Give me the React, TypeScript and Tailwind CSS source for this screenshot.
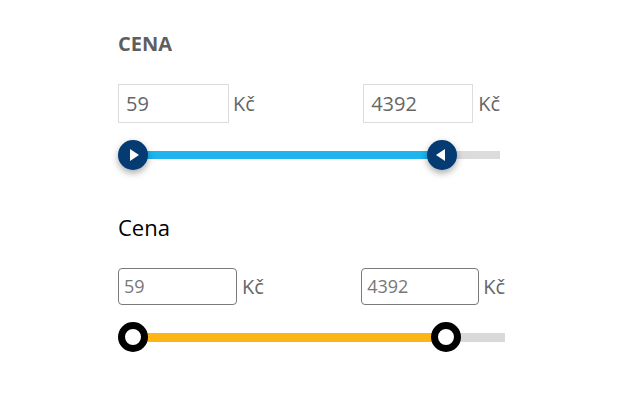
import React from "react";

const font = { fontFamily: '"Open Sans", "Liberation Sans", sans-serif' };

function PlayTriangle({ dir }: { dir: "left" | "right" }) {
  return (
    <svg width="9" height="12" viewBox="0 0 9 12" className={dir === "right" ? "ml-[3px]" : "mr-[3px]"}>
      {dir === "right" ? (
        <polygon points="0,0 9,6 0,12" fill="#fff" />
      ) : (
        <polygon points="9,0 0,6 9,12" fill="#fff" />
      )}
    </svg>
  );
}

function BlueSlider() {
  return (
    <div className="relative h-[30px] w-[382px]">
      <div className="absolute left-[15px] right-0 top-[11px] h-[8px] bg-[#dcdcdc]" />
      <div className="absolute left-[15px] w-[309px] top-[11px] h-[8px] bg-[#1fb3ef]" />
      <div className="absolute left-0 top-0 w-[30px] h-[30px] rounded-full bg-[#033b72] shadow-[0_3px_7px_rgba(0,0,0,0.35)] flex items-center justify-center">
        <PlayTriangle dir="right" />
      </div>
      <div className="absolute left-[309px] top-0 w-[30px] h-[30px] rounded-full bg-[#033b72] shadow-[0_3px_7px_rgba(0,0,0,0.35)] flex items-center justify-center">
        <PlayTriangle dir="left" />
      </div>
    </div>
  );
}

function YellowSlider() {
  return (
    <div className="relative h-[30px] w-[387px]">
      <div className="absolute left-[15px] right-0 top-[11px] h-[9px] bg-[#d9d9d9]" />
      <div className="absolute left-[15px] w-[313px] top-[11px] h-[9px] bg-[#fdb515]" />
      <div className="absolute left-0 top-0 w-[30px] h-[30px] rounded-full bg-white border-[7px] border-black" />
      <div className="absolute left-[313px] top-0 w-[30px] h-[30px] rounded-full bg-white border-[7px] border-black" />
    </div>
  );
}

export default function App() {
  return (
    <div className="w-[630px] h-[402px] bg-white pl-[118px]" style={font}>
      {/* first variant */}
      <div className="pt-[34px]">
        <h2 className="text-[20px] leading-none font-bold text-[#5f5f5f]">CENA</h2>
        <div className="mt-[30px] w-[382px] flex justify-between items-center">
          <div className="flex items-center gap-[4px]">
            <div className="w-[111px] h-[39px] border border-[#dcdcdc] flex items-center pl-[7px] text-[20px] text-[#666]">59</div>
            <span className="text-[20px] text-[#666]">Kč</span>
          </div>
          <div className="flex items-center gap-[5px]">
            <div className="w-[110px] h-[39px] border border-[#dcdcdc] flex items-center pl-[7px] text-[20px] text-[#666]">4392</div>
            <span className="text-[20px] text-[#666]">Kč</span>
          </div>
        </div>
        <div className="mt-[17px]">
          <BlueSlider />
        </div>
      </div>

      {/* second variant */}
      <div className="mt-[46px]">
        <h2 className="text-[22px] leading-none text-black">Cena</h2>
        <div className="mt-[30px] w-[387px] flex justify-between items-center">
          <div className="flex items-center gap-[5px]">
            <div className="w-[119px] h-[37px] border border-[#7a7a7a] rounded-[4px] flex items-center pl-[5px] text-[18px] text-[#777]">59</div>
            <span className="text-[20px] text-[#666]">Kč</span>
          </div>
          <div className="flex items-center gap-[4px]">
            <div className="w-[118px] h-[37px] border border-[#7a7a7a] rounded-[4px] flex items-center pl-[5px] text-[18px] text-[#777]">4392</div>
            <span className="text-[20px] text-[#666]">Kč</span>
          </div>
        </div>
        <div className="mt-[17px]">
          <YellowSlider />
        </div>
      </div>
    </div>
  );
}
